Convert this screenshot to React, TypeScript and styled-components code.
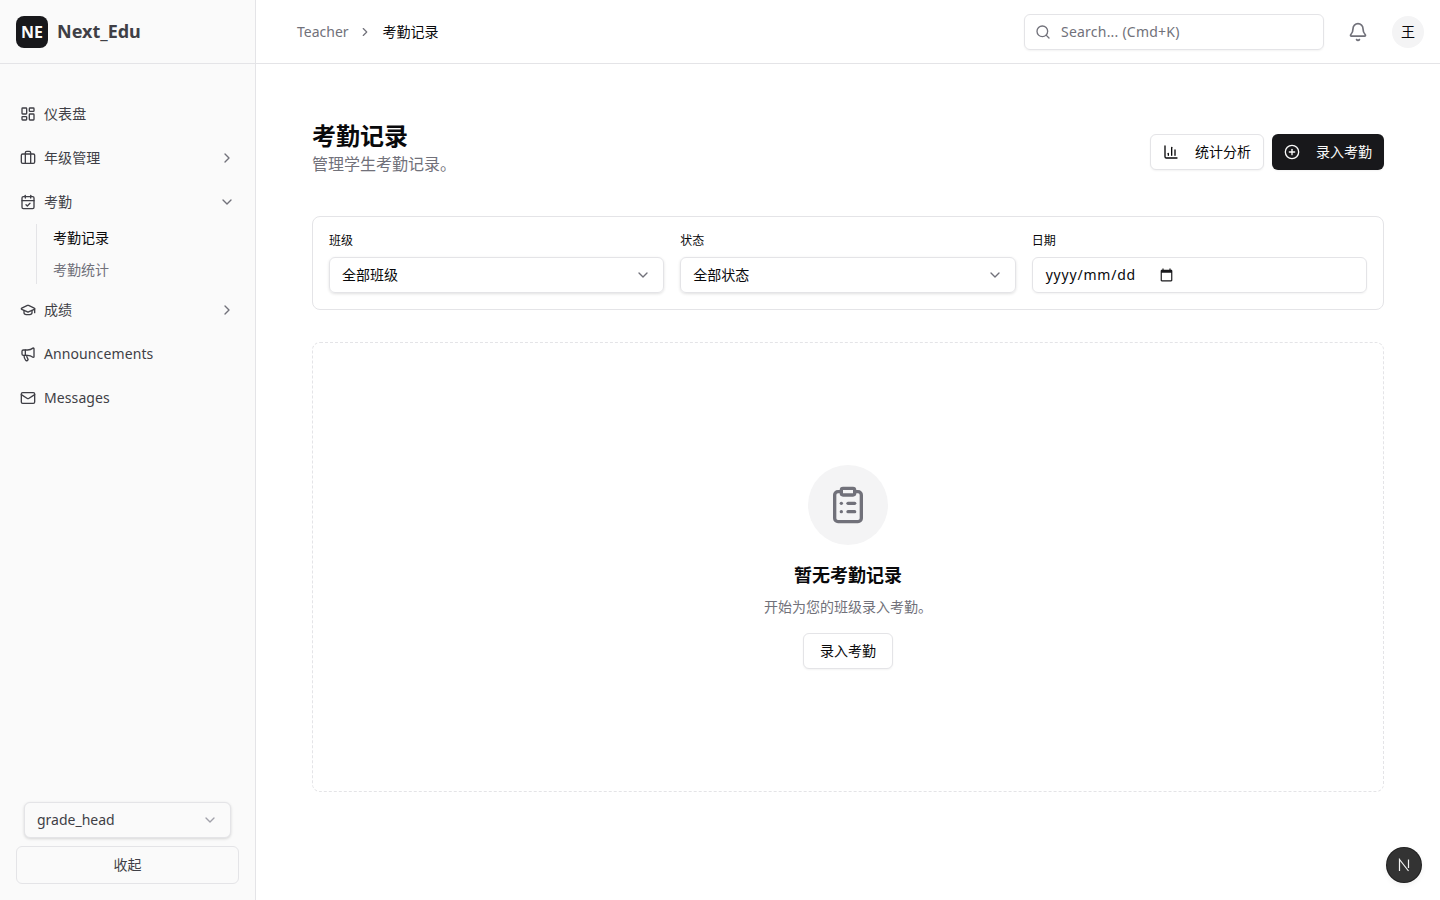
import React from "react";
import styled, { createGlobalStyle } from "styled-components";
import {
    Bell,
    Briefcase,
    CalendarCheck,
    ChartColumn,
    ChevronDown,
    ChevronRight,
    CirclePlus,
    ClipboardList,
    GraduationCap,
    LayoutDashboard,
    Mail,
    Megaphone,
    Search,
} from "lucide-react";

const GlobalStyle = createGlobalStyle`
    * {
        box-sizing: border-box;
    }
    html,
    body {
        margin: 0;
        height: 100%;
        background: #ffffff;
        color: #09090b;
        font-family: "Noto Sans", "Noto Sans CJK SC", sans-serif;
        line-height: 20px;
    }
`;

const Page = styled.div`
    display: flex;
    width: 100%;
    height: 100vh;
    overflow: hidden;
`;

const Sidebar = styled.aside`
    display: flex;
    flex-direction: column;
    flex: 0 0 256px;
    width: 256px;
    height: 100%;
    background: #fafafa;
    border-right: 1px solid #e4e4e7;
`;

const Brand = styled.div`
    display: flex;
    align-items: center;
    gap: 8px;
    height: 64px;
    padding: 0 16px;
    border-bottom: 1px solid #e4e4e7;
`;

const BrandMark = styled.div`
    display: flex;
    align-items: center;
    justify-content: center;
    width: 32px;
    height: 32px;
    border-radius: 8px;
    background: #18181b;
    color: #fafafa;
    font-size: 16px;
    font-weight: 700;
`;

const BrandName = styled.span`
    margin: 0 0 2px 1px;
    font-size: 18px;
    font-weight: 700;
    line-height: 28px;
    color: #3f3f46;
`;

const Nav = styled.nav`
    display: flex;
    flex: 1;
    flex-direction: column;
    gap: 8px;
    padding: 32px 8px 0;
`;

const NavItem = styled.a`
    display: flex;
    align-items: center;
    gap: 8px;
    height: 36px;
    padding: 0 12px;
    border-radius: 6px;
    font-size: 14px;
    color: #3f3f46;
    svg {
        flex-shrink: 0;
    }
`;

const NavLabel = styled.span`
    flex: 1;
    letter-spacing: 0.1px;
`;

const NavChevron = styled.span`
    display: flex;
    color: #71717a;
`;

const SubNav = styled.div`
    display: flex;
    flex-direction: column;
    gap: 4px;
    margin: -4px 0 0 28px;
    padding-left: 16px;
    border-left: 1px solid #e4e4e7;
`;

const SubItem = styled.a<{ $active?: boolean }>`
    display: flex;
    align-items: center;
    height: 28px;
    font-size: 14px;
    color: ${props => (props.$active ? "#09090b" : "#71717a")};
`;

const SidebarFooter = styled.div`
    display: flex;
    flex-direction: column;
    gap: 8px;
    padding: 16px;
`;

const RoleSelect = styled.div`
    display: flex;
    align-items: center;
    justify-content: space-between;
    height: 36px;
    margin: 0 8px;
    padding: 0 12px;
    border: 1px solid #e4e4e7;
    border-radius: 6px;
    background: #fafafa;
    box-shadow: 0 1px 3px rgba(0, 0, 0, 0.15);
    font-size: 14px;
    color: #3f3f46;
    svg {
        color: #a1a1aa;
    }
`;

const CollapseButton = styled.button`
    height: 38px;
    border: 1px solid #e4e4e7;
    border-radius: 6px;
    background: transparent;
    font-family: inherit;
    font-size: 14px;
    line-height: 20px;
    color: #3f3f46;
`;

const Main = styled.div`
    display: flex;
    flex: 1;
    flex-direction: column;
    min-width: 0;
`;

const TopBar = styled.header`
    display: flex;
    align-items: center;
    height: 64px;
    padding: 0 16px 0 41px;
    border-bottom: 1px solid #e4e4e7;
`;

const Crumbs = styled.div`
    display: flex;
    flex: 1;
    align-items: center;
    gap: 9px;
    font-size: 14px;
    color: #71717a;
    svg {
        color: #71717a;
    }
`;

const CrumbCurrent = styled.span`
    margin-left: 2px;
    color: #09090b;
`;

const SearchBox = styled.div`
    display: flex;
    align-items: center;
    gap: 10px;
    width: 300px;
    height: 36px;
    padding: 0 10px;
    border: 1px solid #e4e4e7;
    border-radius: 6px;
    box-shadow: 0 1px 2px rgba(0, 0, 0, 0.05);
    font-size: 14px;
    letter-spacing: 0.22px;
    color: #71717a;
`;

const BellButton = styled.div`
    display: flex;
    align-items: center;
    justify-content: center;
    width: 36px;
    height: 36px;
    margin-left: 16px;
    color: #71717a;
`;

const Avatar = styled.div`
    display: flex;
    align-items: center;
    justify-content: center;
    width: 32px;
    height: 32px;
    margin-left: 16px;
    border-radius: 50%;
    background: #f4f4f5;
    font-size: 14px;
`;

const Content = styled.main`
    padding: 56px;
`;

const PageHeader = styled.div`
    display: flex;
    align-items: center;
    justify-content: space-between;
    margin-bottom: 32px;
`;

const TitleBlock = styled.div`
    padding-bottom: 8px;
`;

const Title = styled.h1`
    margin: 0;
    font-size: 24px;
    font-weight: 700;
    line-height: 32px;
`;

const Subtitle = styled.p`
    margin: 0;
    font-size: 16px;
    line-height: 24px;
    color: #71717a;
`;

const Actions = styled.div`
    display: flex;
    gap: 8px;
`;

const ActionButton = styled.button<{ $primary?: boolean }>`
    display: flex;
    align-items: center;
    gap: 16px;
    height: 36px;
    padding: 0 12px;
    border: ${props => (props.$primary ? "none" : "1px solid #e4e4e7")};
    border-radius: 6px;
    background: ${props => (props.$primary ? "#18181b" : "#ffffff")};
    box-shadow: 0 1px 2px rgba(0, 0, 0, 0.05);
    font-family: inherit;
    font-size: 14px;
    line-height: 20px;
    color: ${props => (props.$primary ? "#fafafa" : "#09090b")};
`;

const FilterCard = styled.section`
    display: grid;
    grid-template-columns: repeat(3, 1fr);
    gap: 16px;
    margin-bottom: 32px;
    padding: 16px;
    border: 1px solid #e4e4e7;
    border-radius: 8px;
`;

const Field = styled.div`
    display: flex;
    flex-direction: column;
    gap: 8px;
    min-width: 0;
`;

const FieldLabel = styled.label`
    font-size: 12px;
    font-weight: 400;
    line-height: 16px;
`;

const FieldSelect = styled.div`
    display: flex;
    align-items: center;
    justify-content: space-between;
    height: 36px;
    padding: 0 12px;
    border: 1px solid #e4e4e7;
    border-radius: 6px;
    box-shadow: 0 1px 3px rgba(0, 0, 0, 0.12);
    font-size: 14px;
    svg {
        color: #71717a;
    }
`;

const DateBox = styled.div`
    display: flex;
    align-items: center;
    height: 36px;
    padding: 0 13px;
    border: 1px solid #e4e4e7;
    border-radius: 6px;
    box-shadow: 0 1px 2px rgba(0, 0, 0, 0.05);
    font-size: 14px;
    letter-spacing: 0.8px;
`;

const DateText = styled.span`
    width: 113px;
`;

const EmptyState = styled.section`
    display: flex;
    flex-direction: column;
    align-items: center;
    justify-content: center;
    height: 450px;
    border: 1px dashed #e4e4e7;
    border-radius: 8px;
`;

const EmptyIcon = styled.div`
    display: flex;
    align-items: center;
    justify-content: center;
    width: 80px;
    height: 80px;
    margin-bottom: 16px;
    border-radius: 50%;
    background: #f4f4f5;
    color: #71717a;
`;

const EmptyTitle = styled.h3`
    margin: 0 0 8px;
    font-size: 18px;
    font-weight: 700;
    line-height: 28px;
`;

const EmptyText = styled.p`
    margin: 0 0 16px;
    font-size: 14px;
    line-height: 20px;
    color: #71717a;
`;

const EmptyButton = styled.button`
    height: 36px;
    padding: 0 16px;
    border: 1px solid #e4e4e7;
    border-radius: 6px;
    background: #ffffff;
    box-shadow: 0 1px 2px rgba(0, 0, 0, 0.05);
    font-family: inherit;
    font-size: 14px;
    line-height: 20px;
    color: #09090b;
`;

const DevBadge = styled.div`
    position: fixed;
    right: 19px;
    bottom: 18px;
    display: flex;
    align-items: center;
    justify-content: center;
    width: 34px;
    height: 34px;
    border-radius: 50%;
    background: #333333;
    box-shadow: 0 0 0 1px #1f1f1f, 0 2px 6px rgba(0, 0, 0, 0.08);
`;

const NextMark = () => (
    <svg width="14" height="14" viewBox="0 0 14 14" fill="none" stroke="#f2f2f2" strokeWidth="1.2">
        <path d="M2.5 13V1.5L11.5 13" />
        <path d="M11.5 1.5V10" />
    </svg>
);

const CalendarGlyph = () => (
    <svg width="15" height="14" viewBox="0 0 24 24" fill="#18181b">
        <path d="M20 3h-1V1h-2v2H7V1H5v2H4c-1.1 0-2 .9-2 2v16c0 1.1.9 2 2 2h16c1.1 0 2-.9 2-2V5c0-1.1-.9-2-2-2zm0 18H4V8h16v13z" />
    </svg>
);

const App: React.FC = () => (
    <Page>
        <GlobalStyle />
        <Sidebar>
            <Brand>
                <BrandMark>NE</BrandMark>
                <BrandName>Next_Edu</BrandName>
            </Brand>
            <Nav>
                <NavItem>
                    <LayoutDashboard size={16} />
                    <NavLabel>仪表盘</NavLabel>
                </NavItem>
                <NavItem>
                    <Briefcase size={16} />
                    <NavLabel>年级管理</NavLabel>
                    <NavChevron>
                        <ChevronRight size={16} />
                    </NavChevron>
                </NavItem>
                <NavItem>
                    <CalendarCheck size={16} />
                    <NavLabel>考勤</NavLabel>
                    <NavChevron>
                        <ChevronDown size={16} />
                    </NavChevron>
                </NavItem>
                <SubNav>
                    <SubItem $active>考勤记录</SubItem>
                    <SubItem>考勤统计</SubItem>
                </SubNav>
                <NavItem>
                    <GraduationCap size={16} />
                    <NavLabel>成绩</NavLabel>
                    <NavChevron>
                        <ChevronRight size={16} />
                    </NavChevron>
                </NavItem>
                <NavItem>
                    <Megaphone size={16} />
                    <NavLabel>Announcements</NavLabel>
                </NavItem>
                <NavItem>
                    <Mail size={16} />
                    <NavLabel>Messages</NavLabel>
                </NavItem>
            </Nav>
            <SidebarFooter>
                <RoleSelect>
                    grade_head
                    <ChevronDown size={16} />
                </RoleSelect>
                <CollapseButton>收起</CollapseButton>
            </SidebarFooter>
        </Sidebar>
        <Main>
            <TopBar>
                <Crumbs>
                    Teacher
                    <ChevronRight size={14} />
                    <CrumbCurrent>考勤记录</CrumbCurrent>
                </Crumbs>
                <SearchBox>
                    <Search size={16} />
                    Search... (Cmd+K)
                </SearchBox>
                <BellButton>
                    <Bell size={20} />
                </BellButton>
                <Avatar>王</Avatar>
            </TopBar>
            <Content>
                <PageHeader>
                    <TitleBlock>
                        <Title>考勤记录</Title>
                        <Subtitle>管理学生考勤记录。</Subtitle>
                    </TitleBlock>
                    <Actions>
                        <ActionButton>
                            <ChartColumn size={16} />
                            统计分析
                        </ActionButton>
                        <ActionButton $primary>
                            <CirclePlus size={16} />
                            录入考勤
                        </ActionButton>
                    </Actions>
                </PageHeader>
                <FilterCard>
                    <Field>
                        <FieldLabel>班级</FieldLabel>
                        <FieldSelect>
                            全部班级
                            <ChevronDown size={16} />
                        </FieldSelect>
                    </Field>
                    <Field>
                        <FieldLabel>状态</FieldLabel>
                        <FieldSelect>
                            全部状态
                            <ChevronDown size={16} />
                        </FieldSelect>
                    </Field>
                    <Field>
                        <FieldLabel>日期</FieldLabel>
                        <DateBox>
                            <DateText>yyyy/mm/dd</DateText>
                            <CalendarGlyph />
                        </DateBox>
                    </Field>
                </FilterCard>
                <EmptyState>
                    <EmptyIcon>
                        <ClipboardList size={40} />
                    </EmptyIcon>
                    <EmptyTitle>暂无考勤记录</EmptyTitle>
                    <EmptyText>开始为您的班级录入考勤。</EmptyText>
                    <EmptyButton>录入考勤</EmptyButton>
                </EmptyState>
            </Content>
        </Main>
        <DevBadge>
            <NextMark />
        </DevBadge>
    </Page>
);

export default App;
